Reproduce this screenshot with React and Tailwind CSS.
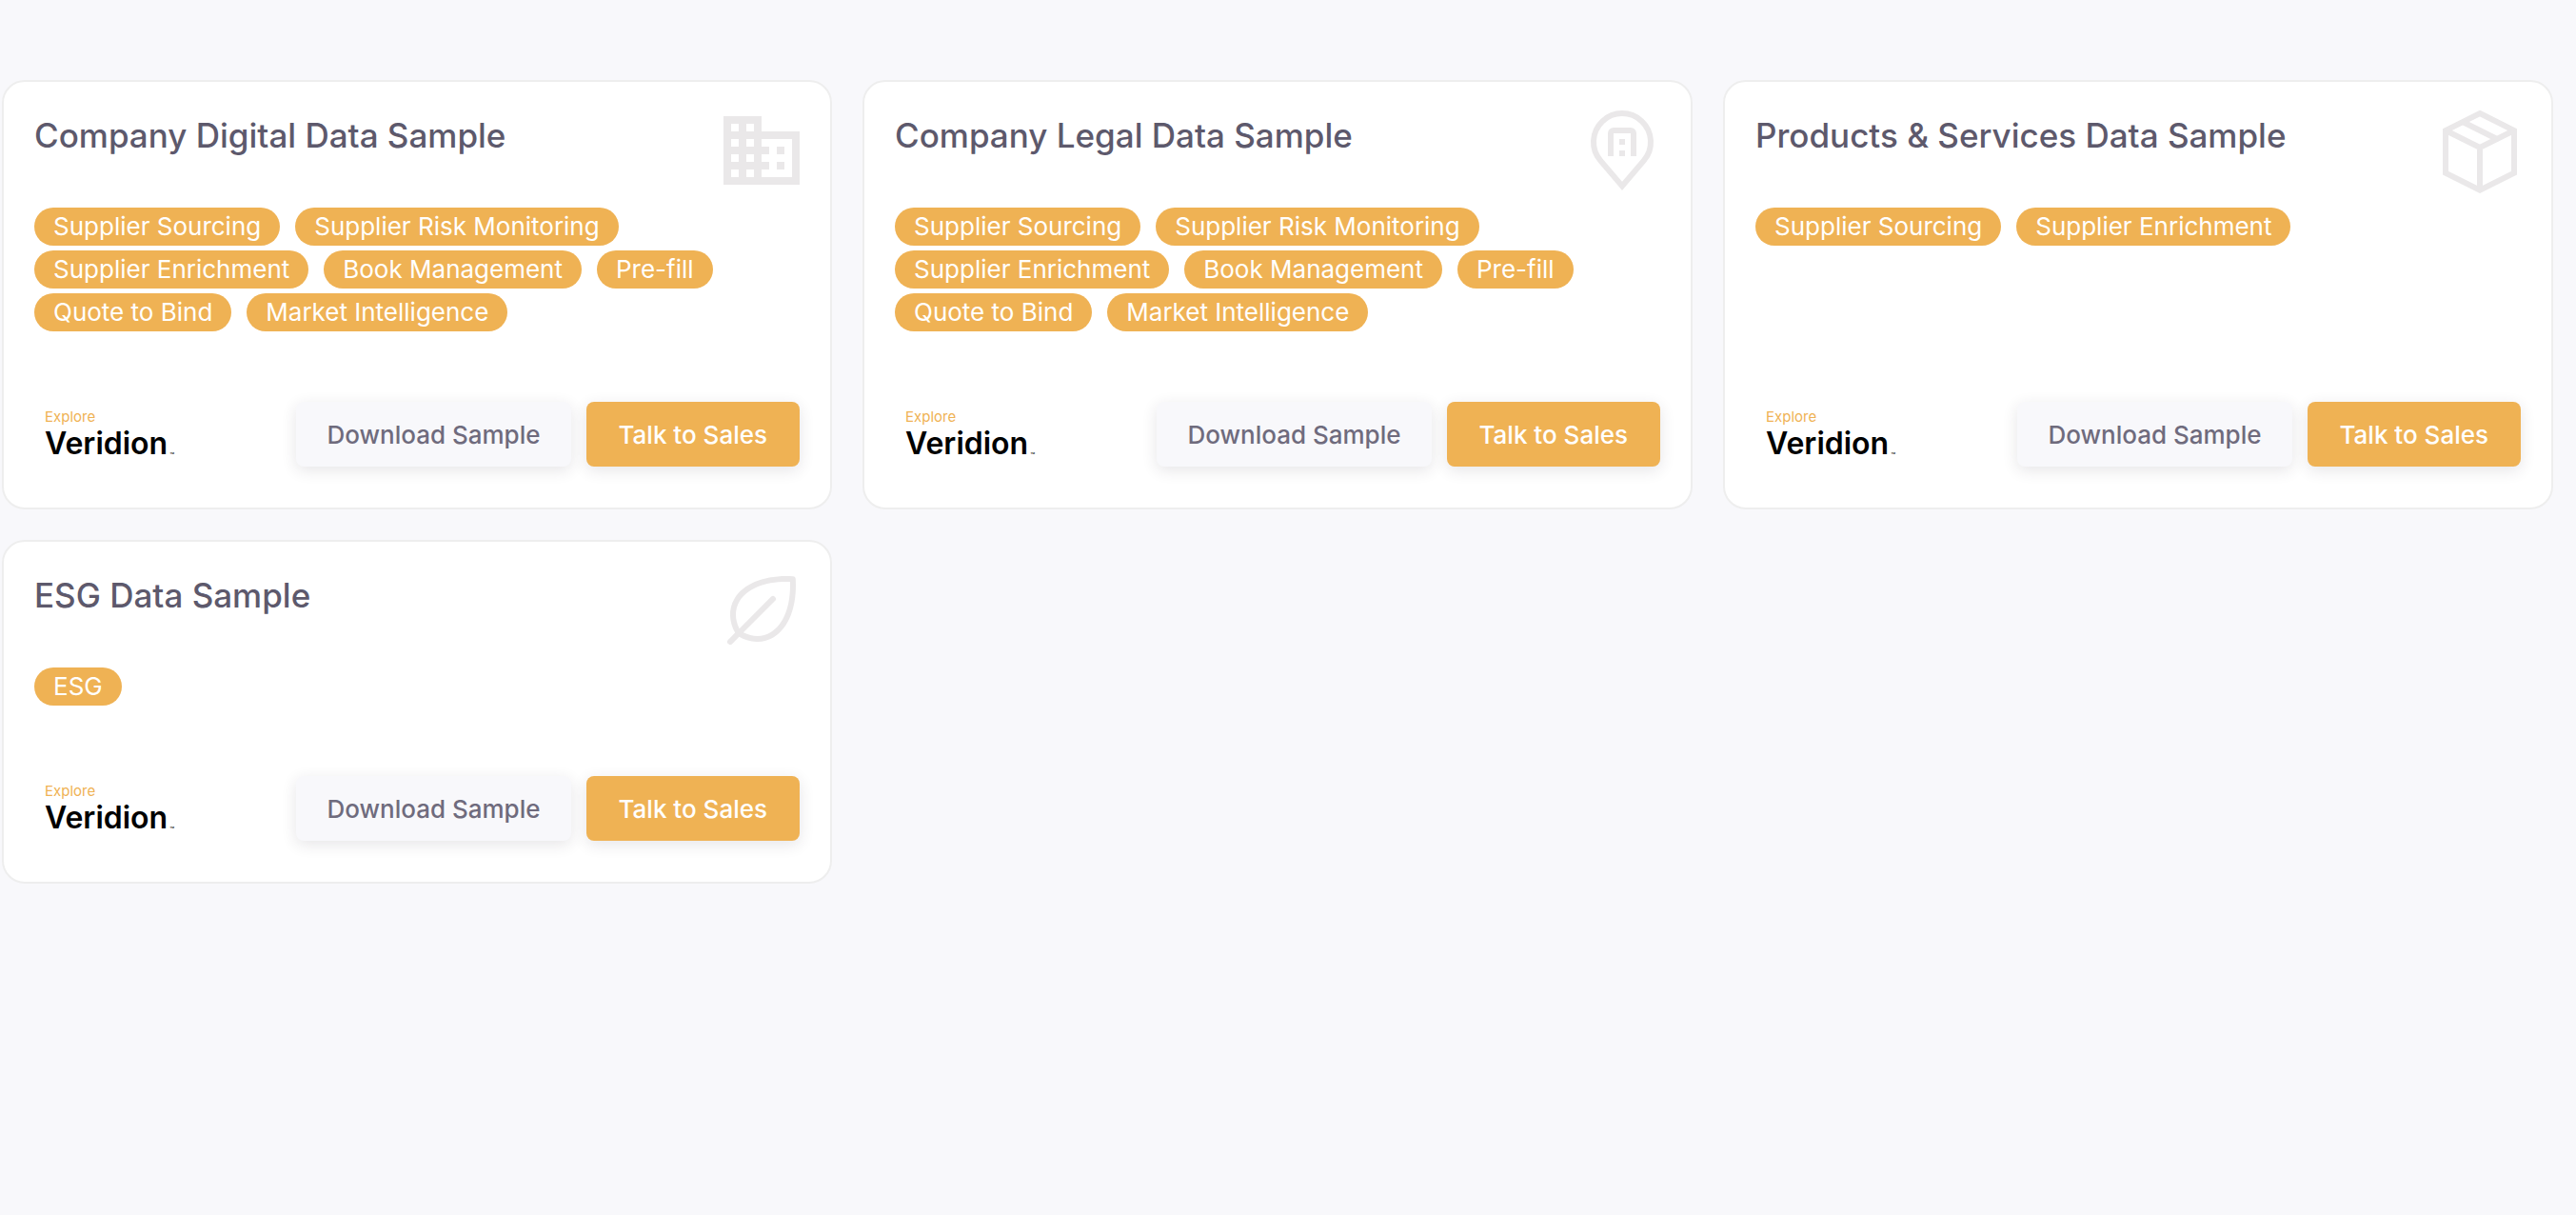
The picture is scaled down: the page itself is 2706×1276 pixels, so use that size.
import { MdBusiness } from "react-icons/md";
import { PiLeaf } from "react-icons/pi";

function LegalIcon({ className }) {
  return (
    <svg viewBox="0 0 24 24" fill="none" stroke="currentColor" strokeWidth="1.5" className={className} aria-hidden="true">
      <path d="M12 21.35 6.3 14.65A7.5 7.5 0 1 1 17.7 14.65Z" strokeMiterlimit="10" />
      <path d="M9 13.5V7.5a.75.75 0 0 1 .75-.75h4.5a.75.75 0 0 1 .75.75v6" />
      <path d="M11.25 9h1.5v1.5h-1.5zM11.25 12h1.5v1.5h-1.5z" fill="currentColor" stroke="none" />
    </svg>
  );
}

function PackageIcon({ className }) {
  return (
    <svg viewBox="0 0 24 24" fill="none" stroke="currentColor" strokeWidth="1.5" className={className} aria-hidden="true">
      <path d="M11.25 2.25 20.25 6.75V17.92L11.25 22.42 2.25 17.92V6.75Z" />
      <path d="M2.25 6.75 11.25 11.25 20.25 6.75M11.25 11.25V22.42M6.75 4.5 15.75 9" />
    </svg>
  );
}

const SAMPLES = [
  {
    title: "Company Digital Data Sample",
    Icon: MdBusiness,
    tags: ["Supplier Sourcing", "Supplier Risk Monitoring", "Supplier Enrichment", "Book Management", "Pre-fill", "Quote to Bind", "Market Intelligence"],
  },
  {
    title: "Company Legal Data Sample",
    Icon: LegalIcon,
    tags: ["Supplier Sourcing", "Supplier Risk Monitoring", "Supplier Enrichment", "Book Management", "Pre-fill", "Quote to Bind", "Market Intelligence"],
  },
  {
    title: "Products & Services Data Sample",
    Icon: PackageIcon,
    tags: ["Supplier Sourcing", "Supplier Enrichment"],
  },
  { title: "ESG Data Sample", Icon: PiLeaf, tags: ["ESG"] },
];

function VeridionLink() {
  return (
    <a href="#veridion" className="ml-[11px] flex flex-col pt-1">
      <span className="text-[15px] leading-4 text-[#efb254]">Explore</span>
      <span className="flex items-end text-[32px] leading-10 font-semibold text-black">
        Veridion
        <span className="ml-0.5 text-[8px] leading-4 font-normal">™</span>
      </span>
    </a>
  );
}

function SampleCard({ title, Icon, tags }) {
  return (
    <article className="flex flex-col rounded-3xl border-2 border-[#eeeeee] bg-white px-8 pt-6 pb-[43px]">
      <header className="flex items-start justify-between">
        <h2 className="pt-2 text-[35px] leading-[48px] font-medium text-[#5d596c]">{title}</h2>
        <Icon className="-mr-2 size-24 shrink-0 text-[#eae8e9]" />
      </header>
      <ul className="mt-3 flex flex-wrap gap-x-4 gap-y-[5px]">
        {tags.map((tag) => (
          <li key={tag} className="rounded-full bg-[#efb254] px-5 text-[26px] leading-10 font-normal text-white">
            {tag}
          </li>
        ))}
      </ul>
      <footer className="mt-auto flex items-center justify-between pt-[74px]">
        <VeridionLink />
        <div className="flex gap-4">
          <button type="button" className="h-[68px] rounded-lg bg-[#f8f8fb] px-8 text-[26px] font-medium text-[#6f6b7d] shadow-[0_4px_16px_rgba(47,43,61,0.12)]">
            Download Sample
          </button>
          <button type="button" className="h-[68px] rounded-lg bg-[#efb254] px-[34px] text-[26px] font-medium text-white shadow-[0_4px_16px_rgba(47,43,61,0.12)]">
            Talk to Sales
          </button>
        </div>
      </footer>
    </article>
  );
}

export default function App() {
  return (
    <main className="min-h-screen bg-[#f8f8fb] pt-[84px] pr-6 pl-0.5 font-['Inter',sans-serif]">
      <div className="grid grid-cols-3 gap-8">
        {SAMPLES.map((sample) => (
          <SampleCard key={sample.title} {...sample} />
        ))}
      </div>
    </main>
  );
}
